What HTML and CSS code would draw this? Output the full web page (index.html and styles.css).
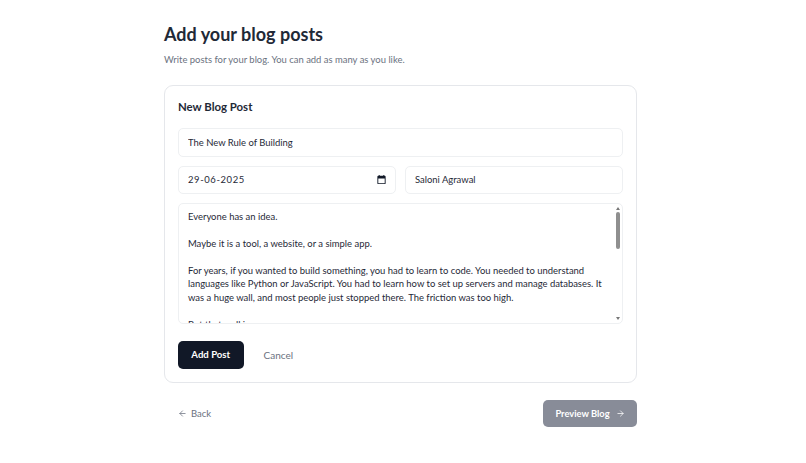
FILE: index.html
```html
<!DOCTYPE html>
<html lang="en">
<head>
<meta charset="utf-8">
<title>Add your blog posts</title>
<link rel="stylesheet" href="styles.css">
</head>
<body>
<main class="page">
  <h1 class="title">Add your blog posts</h1>
  <p class="subtitle">Write posts for your blog. You can add as many as you like.</p>
  <section class="card">
    <h2 class="card-title">New Blog Post</h2>
    <input class="field" type="text" value="The New Rule of Building">
    <div class="row">
      <div class="date-wrap">
        <input class="field date-text" type="text" value="29-06-2025">
        <svg class="cal" viewBox="0 0 24 24" width="11" height="11" aria-hidden="true"><path fill="#111827" d="M19 4h-1V2h-2v2H8V2H6v2H5a2 2 0 0 0-2 2v14a2 2 0 0 0 2 2h14a2 2 0 0 0 2-2V6a2 2 0 0 0-2-2zm0 16H5V10h14v10z"/></svg>
      </div>
      <input class="field" type="text" value="Saloni Agrawal">
    </div>
    <div class="area-wrap">
      <textarea class="field body-text">Everyone has an idea.

Maybe it is a tool, a website, or a simple app.

For years, if you wanted to build something, you had to learn to code. You needed to understand languages like Python or JavaScript. You had to learn how to set up servers and manage databases. It was a huge wall, and most people just stopped there. The friction was too high.

But that wall is gone now.

Today, anyone can describe what they want and watch it come to life. The tools have changed, and so have the rules of who gets to build. The only thing that matters now is whether your idea is worth building at all.

So the new rule is simple. Start with the problem, and let the tools follow.</textarea>
      <div class="scrollbar" aria-hidden="true">
        <span class="arrow-up"></span>
        <span class="thumb"></span>
        <span class="arrow-down"></span>
      </div>
    </div>
    <div class="actions">
      <button class="btn-primary" type="button">Add Post</button>
      <button class="btn-ghost" type="button">Cancel</button>
    </div>
  </section>
  <nav class="footer">
    <a class="back" href="#">
      <svg viewBox="0 0 24 24" width="9" height="9" fill="none" stroke="#6b7280" stroke-width="2" stroke-linecap="round" stroke-linejoin="round" aria-hidden="true"><path d="M19 12H5M12 19l-7-7 7-7"/></svg>
      <span>Back</span>
    </a>
    <button class="btn-preview" type="button">
      <span>Preview Blog</span>
      <svg viewBox="0 0 24 24" width="9" height="9" fill="none" stroke="#fff" stroke-width="2" stroke-linecap="round" stroke-linejoin="round" aria-hidden="true"><path d="M5 12h14M12 5l7 7-7 7"/></svg>
    </button>
  </nav>
</main>
</body>
</html>
```
FILE: styles.css
```css
* { box-sizing: border-box; }
html, body { margin: 0; padding: 0; background: #fff; }
body { font-family: "Lato", "Liberation Sans", sans-serif; color: #111827; padding: 0 5px 0 0; }
.page { width: 473px; margin: 0 auto; padding-top: 23px; }
.title { margin: 0; font-size: 18px; line-height: 23px; font-weight: 700; color: #1f2937; }
.subtitle { margin: 6px 0 0; font-size: 9.45px; line-height: 16px; color: #6b7280; }
.card { margin-top: 17px; height: 297.5px; padding: 13px; border: 1px solid #e5e7eb; border-radius: 9px; background: #fff; display: flex; flex-direction: column; gap: 9px; }
.card-title { margin: 0 0 5px; font-size: 11.4px; line-height: 15px; font-weight: 700; color: #1f2937; }
.field { display: block; width: 100%; height: 28.5px; padding: 0 9px; border: 1px solid #eef0f2; border-radius: 5px; font: 400 9.45px/13px "Lato", sans-serif; color: #1f2937; background: #fff; outline: none; }
.row { display: grid; grid-template-columns: 1fr 1fr; gap: 9px; }
.date-wrap { position: relative; }
.date-text { letter-spacing: 0.6px; }
.cal { position: absolute; right: 9.5px; top: 8.5px; }
.area-wrap { position: relative; height: 121px; }
.body-text { height: 121px; padding: 6px 16px 0 9px; line-height: 13.45px; resize: none; overflow: hidden; }
.scrollbar { position: absolute; top: 1px; right: 1px; bottom: 1px; width: 8px; display: flex; flex-direction: column; align-items: center; }
.arrow-up, .arrow-down { width: 0; height: 0; border-left: 2.5px solid transparent; border-right: 2.5px solid transparent; }
.arrow-up { margin-top: 3px; border-bottom: 3px solid #777; }
.arrow-down { margin-top: auto; margin-bottom: 3px; border-top: 3px solid #777; }
.thumb { margin-top: 2px; width: 4px; height: 37px; border-radius: 2px; background: #8f8f8f; }
.actions { margin-top: 8px; display: flex; align-items: center; gap: 20px; }
.btn-primary { width: 65.5px; height: 27.5px; border: 0; border-radius: 5px; background: #111827; color: #fff; font: 700 9.6px "Lato", sans-serif; }
.btn-ghost { padding: 0; border: 0; background: none; color: #6b7280; font: 400 10px "Lato", sans-serif; }
.footer { margin-top: 17.5px; padding-left: 14px; display: flex; justify-content: space-between; align-items: center; }
.back { display: flex; align-items: center; gap: 4px; font-size: 9.5px; color: #6b7280; text-decoration: none; }
.btn-preview { width: 94px; height: 27px; border: 0; border-radius: 5px; background: #888c98; color: #fff; font: 700 9.3px "Lato", sans-serif; display: flex; align-items: center; justify-content: center; gap: 6px; }
```
